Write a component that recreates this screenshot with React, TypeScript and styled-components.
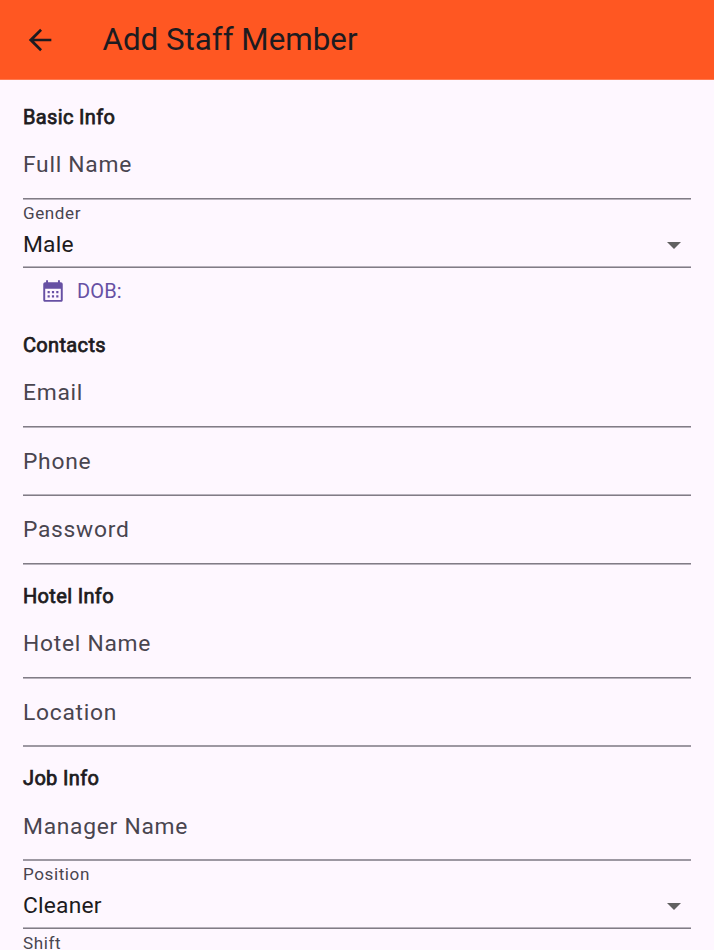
import React from "react";
import styled, { createGlobalStyle } from "styled-components";

const Global = createGlobalStyle`
  * { box-sizing: border-box; }
  html, body { margin: 0; background: #fef7ff; }
  body { font-family: Roboto, sans-serif; color: #1d1b20; height: 950px; overflow: hidden; }
`;
const Page = styled.div`
  height: 950px;
  overflow: hidden;
  background: #fef7ff;
`;
const AppBar = styled.header`
  height: 80px;
  display: flex;
  align-items: center;
  background: linear-gradient(#ff5722 79px, #ff7a50 79px);
  padding-left: 23px;
`;
const BackButton = styled.button`
  width: 34px;
  height: 34px;
  padding: 0;
  border: 0;
  background: none;
  color: #1d1b20;
  display: grid;
  place-items: center;
`;
const Title = styled.h1`
  margin: 0 0 0 45.5px;
  font-size: 31.3px;
  font-weight: 400;
  line-height: 40px;
  white-space: nowrap;
`;
const Form = styled.main`
  padding: 23px 23px 0;
`;
const SectionTitle = styled.h2<{ $gap?: number; $h?: number }>`
  margin: ${(p) => p.$gap ?? 0}px 0 0;
  height: ${(p) => p.$h ?? 28}px;
  line-height: 28px;
  font-size: 20px;
  font-weight: 400;
  letter-spacing: 0.34px;
  -webkit-text-stroke: 0.75px #1d1b20;
`;
type Tone = "top" | "even" | "bottom";
const tones: Record<Tone, [string, string]> = {
  top: ["#817c86", "#b8b2bc"],
  even: ["#9d98a2", "#9d98a2"],
  bottom: ["#b8b2bc", "#817c86"],
};
const Field = styled.div<{ $h?: number; $tone?: Tone }>`
  height: ${(p) => p.$h ?? 68}px;
  background: linear-gradient(
      ${(p) => tones[p.$tone ?? "top"][0]} 50%,
      ${(p) => tones[p.$tone ?? "top"][1]} 50%
    ) bottom / 100% 2px no-repeat;
  display: flex;
  align-items: flex-start;
  padding-top: 17px;
`;
const Label = styled.label`
  font-size: 22.8px;
  letter-spacing: 0.73px;
  line-height: 34px;
  color: #49454f;
`;
const SelectField = styled(Field)<{ $top?: number }>`
  flex-direction: column;
  align-items: stretch;
  padding-top: ${(p) => p.$top ?? 3}px;
`;
const SmallLabel = styled.span`
  font-size: 17.1px;
  letter-spacing: 0.57px;
  line-height: 20px;
  color: #49454f;
`;
const Value = styled.div`
  display: flex;
  justify-content: space-between;
  align-items: center;
  font-size: 22.8px;
  letter-spacing: 0.2px;
  line-height: 34px;
  margin-top: 5px;
  padding-right: 10px;
`;
const DateButton = styled.button`
  height: 46px;
  padding: 0 0 0 17px;
  border: 0;
  background: none;
  display: flex;
  align-items: center;
  gap: 11px;
  font: 400 20px/28px Roboto, sans-serif;
  letter-spacing: 0.14px;
  color: #6750a4;
`;
const Arrow = styled.svg`
  margin-top: 1px;
`;

const Select = ({ label, value, top }: { label: string; value?: string; top?: number }) => (
  <SelectField $tone="bottom" $top={top}>
    <SmallLabel>{label}</SmallLabel>
    {value && (
      <Value>
        {value}
        <Arrow width="14" height="7" viewBox="0 0 14 7"><path d="M0 0h14L7 7z" fill="#616161" /></Arrow>
      </Value>
    )}
  </SelectField>
);
const Text = ({ label, h, tone }: { label: string; h?: number; tone?: Tone }) => (
  <Field $h={h} $tone={tone}><Label>{label}</Label></Field>
);

export default function App() {
  return (
    <Page>
      <Global />
      <AppBar>
        <BackButton aria-label="Back">
          <svg width="34" height="34" viewBox="0 0 24 24" fill="currentColor">
            <path d="M20 11.1H7.83l5.59-5.69L12.1 4.1 4.1 12l8 7.9 1.31-1.31L7.83 12.9H20v-1.8z" />
          </svg>
        </BackButton>
        <Title>Add Staff Member</Title>
      </AppBar>
      <Form>
        <SectionTitle>Basic Info</SectionTitle>
        <Text label="Full Name" h={69} />
        <Select label="Gender" value="Male" />
        <DateButton>
          <svg width="26" height="26" viewBox="0 0 24 24" fill="currentColor">
            <path fillRule="evenodd" d="M5.6 2h1.8v2h9.2V2h1.8v2h.8C20.2 4 21 4.8 21 5.8v14.4c0 1-.8 1.8-1.8 1.8H4.8c-1 0-1.8-.8-1.8-1.8V5.8C3 4.8 3.8 4 4.8 4h.8V2zM4.8 10v10.2h14.4V10H4.8zM7 12h2v2H7zm4 0h2v2h-2zm4 0h2v2h-2zm-8 4h2v2H7zm4 0h2v2h-2zm4 0h2v2h-2z" />
          </svg>
          DOB:
        </DateButton>
        <SectionTitle $gap={17}>Contacts</SectionTitle>
        <Text label="Email" h={69} />
        <Text label="Phone" tone="bottom" />
        <Text label="Password" h={69} />
        <SectionTitle $gap={17}>Hotel Info</SectionTitle>
        <Text label="Hotel Name" h={69} />
        <Text label="Location" tone="even" />
        <SectionTitle $gap={17} $h={29}>Job Info</SectionTitle>
        <Text label="Manager Name" tone="even" />
        <Select label="Position" value="Cleaner" />
        <Select label="Shift" top={4} />
      </Form>
    </Page>
  );
}
